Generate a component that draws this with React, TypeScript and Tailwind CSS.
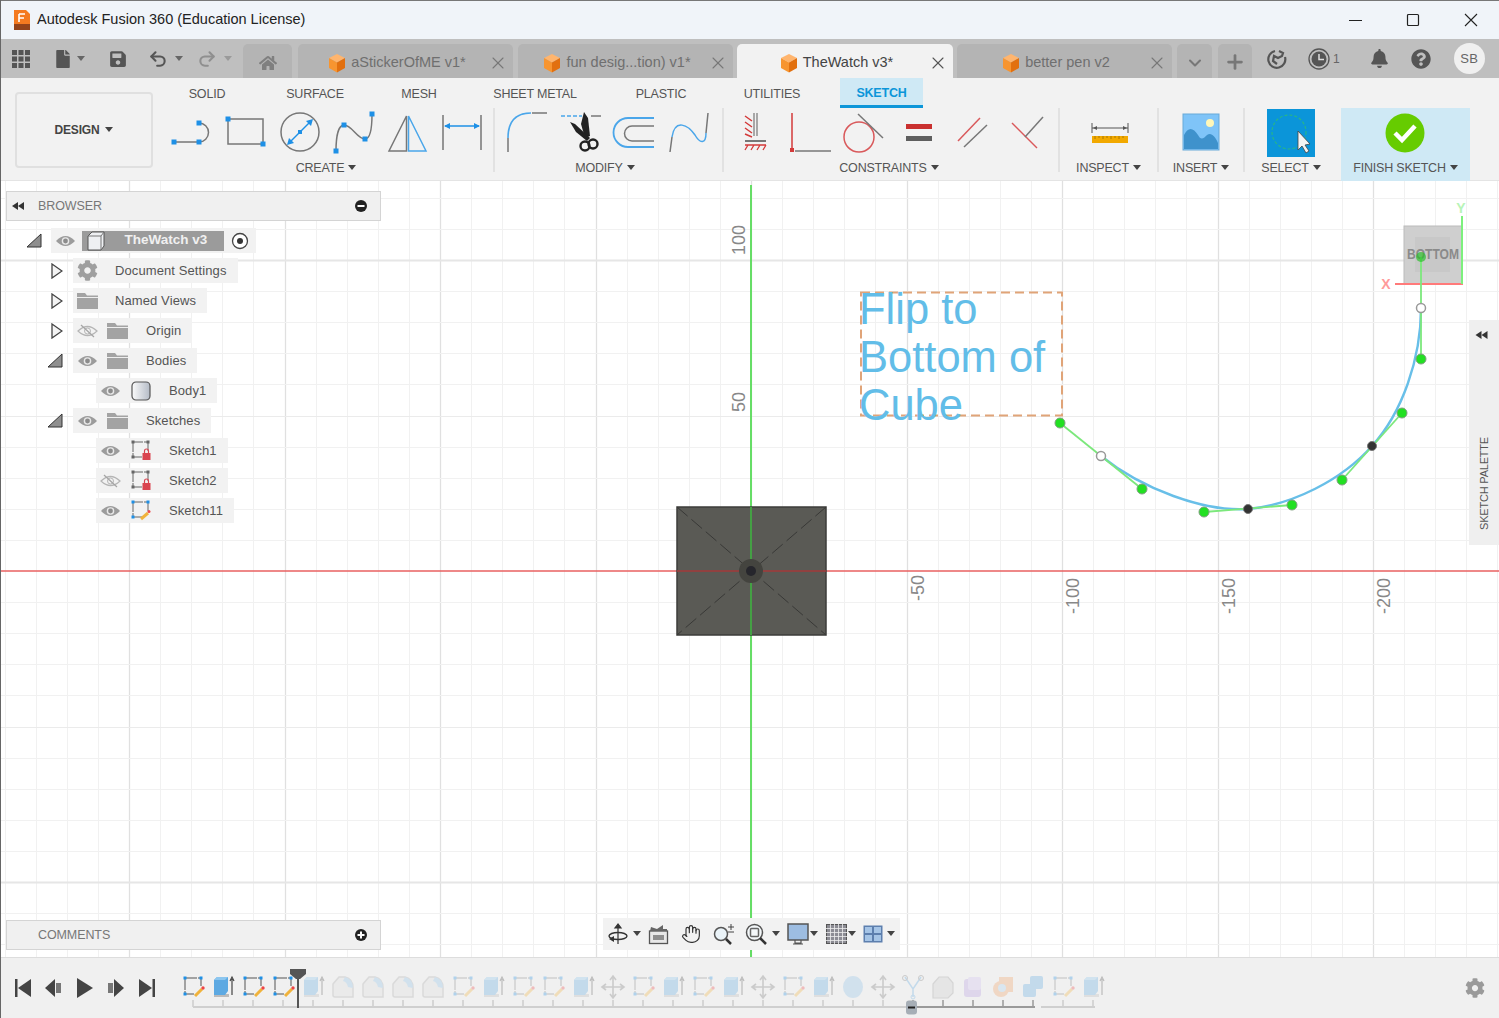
import type { ReactNode } from 'react';
import { Hand, Plus, ChevronDown, X, Undo2, Redo2 } from 'lucide-react';
import { FaCog, FaHome, FaBell, FaQuestionCircle, FaFile, FaSave } from 'react-icons/fa';

const BLUE = '#1e90e6';
const GRAY = '#777777';

function Caret({ color = '#444444' }: { color?: string }) {
    return (
        <svg width="8" height="6" viewBox="0 0 8 6" className="shrink-0">
            <polygon points="0,0 8,0 4,5" fill={color} />
        </svg>
    );
}

function Dot({ x, y, s = 5 }: { x: number; y: number; s?: number }) {
    return <rect x={x - s / 2} y={y - s / 2} width={s} height={s} fill={BLUE} />;
}

function CubeTab() {
    return (
        <svg width="18" height="20" viewBox="0 0 18 20" className="shrink-0">
            <polygon points="9,1 17,5 9,9.500 1,5" fill="#ffb56e" />
            <polygon points="1,5 9,9.500 9,19.500 1,15" fill="#f79530" />
            <polygon points="17,5 9,9.500 9,19.500 17,15" fill="#e2700f" />
        </svg>
    );
}

function Eye({ off = false }: { off?: boolean }) {
    if (off) {
        return (
            <svg width="21" height="14" viewBox="0 0 21 14">
                <path d="M1 7 Q10.500 -2 20 7 Q10.500 16 1 7Z" fill="none" stroke="#b5b5b5" strokeWidth="1.200" />
                <circle cx="10.500" cy="7" r="3" fill="none" stroke="#b5b5b5" />
                <line x1="4" y1="1" x2="17" y2="13" stroke="#a5a5a5" strokeWidth="1.200" />
            </svg>
        );
    }
    return (
        <svg width="21" height="14" viewBox="0 0 21 14">
            <path d="M1 7 Q10.500 -3 20 7 Q10.500 17 1 7Z" fill="#9c9c9c" />
            <circle cx="10.500" cy="7" r="3.800" fill="#e8e8e8" />
            <circle cx="10.500" cy="7" r="2.400" fill="#8c8c8c" />
        </svg>
    );
}

function Folder() {
    return (
        <svg width="21" height="17" viewBox="0 0 21 17">
            <path d="M0 1 H8 L10 3.500 H21 V17 H0Z" fill="#a3a3a3" />
            <rect x="0" y="5" width="21" height="1" fill="#eeeeee" />
        </svg>
    );
}

function SketchIcon({ locked = false }: { locked?: boolean }) {
    const corner = locked ? '#666666' : BLUE;
    return (
        <svg width="22" height="21" viewBox="0 0 22 21">
            <path d="M3 2 H18 M3 2 V17 M3 17 H12 M18 2 V11" stroke="#666666" strokeWidth="1" strokeDasharray="10 1" fill="none" />
            <rect x="1.500" y="0.500" width="3" height="3" fill={corner} />
            <rect x="16.500" y="0.500" width="3" height="3" fill={corner} />
            <rect x="1.500" y="15.500" width="3" height="3" fill={corner} />
            {locked ? (
                <g>
                    <rect x="12.500" y="13" width="8" height="7" fill="#d9434e" />
                    <path d="M14.500 13 V11 A2 2 0 0 1 18.500 11 V13" fill="none" stroke="#d9434e" strokeWidth="1.200" />
                </g>
            ) : (
                <g>
                    <line x1="11" y1="19" x2="18" y2="13" stroke="#f0b33c" strokeWidth="3" />
                    <circle cx="19" cy="11.500" r="1.500" fill="#ec4b4b" />
                </g>
            )}
        </svg>
    );
}

function BodyIcon() {
    return (
        <svg width="20" height="20" viewBox="0 0 20 20">
            <defs>
                <linearGradient id="bodyFill" x1="0" x2="1" y1="0" y2="0">
                    <stop offset="0" stopColor="#fbfbfb" />
                    <stop offset="1" stopColor="#b4bbc6" />
                </linearGradient>
            </defs>
            <rect x="1" y="1" width="18" height="18" rx="4" fill="url(#bodyFill)" stroke="#555555" strokeWidth="1.200" />
        </svg>
    );
}

function Expand({ open = false }: { open?: boolean }) {
    if (open) {
        return (
            <svg width="16" height="15" viewBox="0 0 16 15">
                <polygon points="15,1 15,14 1,14" fill="#8f8f8f" stroke="#333333" strokeWidth="1" />
            </svg>
        );
    }
    return (
        <svg width="12" height="16" viewBox="0 0 12 16">
            <polygon points="1,1 11,8 1,15" fill="#f4f4f4" stroke="#444444" strokeWidth="1.300" />
        </svg>
    );
}

function TreeRow({ slot, open, children, label }: { slot: string; open?: boolean; children: ReactNode; label: string }) {
    return (
        <div className="flex h-[25px] items-center">
            <div className={`flex ${slot} justify-end pr-[10px]`}>{open === undefined ? null : <Expand open={open} />}</div>
            <div className="flex h-[25px] items-center bg-[#f2f2f2] pr-[11px]">
                {children}
                <span className="ml-[13px] text-[13px] tracking-[0.1px] text-[#555555]">{label}</span>
            </div>
        </div>
    );
}

function EyeSlot({ off = false }: { off?: boolean }) {
    return (
        <div className="flex w-[29px] justify-center">
            <Eye off={off} />
        </div>
    );
}

function IconSlot({ children }: { children: ReactNode }) {
    return <div className="flex w-[31px] justify-center">{children}</div>;
}

function CreateIcons() {
    return (
        <>
            <svg width="54" height="50" viewBox="0 0 54 50">
                <path d="M9 34 H34 M34 15 A9.500 9.500 0 0 1 34 34" fill="none" stroke={GRAY} strokeWidth="1.500" />
                <Dot x={9} y={34} />
                <Dot x={34} y={34} />
                <Dot x={34} y={15} />
            </svg>
            <svg width="54" height="50" viewBox="0 0 54 50">
                <rect x="9" y="11" width="35" height="25" fill="none" stroke={GRAY} strokeWidth="1.500" />
                <Dot x={9} y={11} />
                <Dot x={44} y={36} />
            </svg>
            <svg width="54" height="50" viewBox="0 0 54 50">
                <circle cx="27" cy="24" r="19" fill="none" stroke={GRAY} strokeWidth="1.500" />
                <line x1="17" y1="34" x2="37" y2="14" stroke={BLUE} strokeWidth="1.500" />
                <polygon points="40,11 38,18 33,13" fill={BLUE} />
                <polygon points="14,37 16,30 21,35" fill={BLUE} />
                <Dot x={27} y={24} s={4} />
            </svg>
            <svg width="54" height="50" viewBox="0 0 54 50">
                <path d="M9 43 C9 30 11 17 17 17 C25 17 30 31 38 31 C43 31 45 20 45 6" fill="none" stroke={GRAY} strokeWidth="1.500" />
                <Dot x={9} y={43} />
                <Dot x={17} y={17} />
                <Dot x={38} y={31} />
                <Dot x={45} y={6} />
            </svg>
            <svg width="54" height="50" viewBox="0 0 54 50">
                <polygon points="25.500,8 25.500,43 8,43" fill="none" stroke={GRAY} strokeWidth="1.500" />
                <polygon points="27.500,8 27.500,43 45,43" fill="none" stroke="#4aa6ea" strokeWidth="1.500" />
            </svg>
            <svg width="54" height="50" viewBox="0 0 54 50">
                <path d="M8 7 V42 M46 7 V42" stroke={GRAY} strokeWidth="1.500" />
                <line x1="10" y1="18" x2="44" y2="18" stroke={BLUE} strokeWidth="1.500" />
                <polygon points="9,18 15,15 15,21" fill={BLUE} />
                <polygon points="45,18 39,15 39,21" fill={BLUE} />
            </svg>
        </>
    );
}

function ModifyIcons() {
    return (
        <>
            <svg width="54" height="50" viewBox="0 0 54 50">
                <path d="M8 30 Q8 5 31 5" fill="none" stroke="#4aa6ea" strokeWidth="1.600" />
                <path d="M8 30 V44 M32 5 H47" fill="none" stroke={GRAY} strokeWidth="1.500" />
            </svg>
            <svg width="54" height="50" viewBox="0 0 54 50">
                <path d="M7 8 H28" stroke="#4aa6ea" strokeWidth="1.500" strokeDasharray="4 2" />
                <path d="M37 8 H47" stroke={GRAY} strokeWidth="1.500" />
                <polygon points="30,4 34,10 36,28 31,30 27,16" fill="#222222" />
                <polygon points="16,14 21,16 36,30 33,33 22,24" fill="#222222" />
                <circle cx="31" cy="38" r="4.500" fill="none" stroke="#222222" strokeWidth="2.400" />
                <circle cx="39" cy="36" r="4.500" fill="none" stroke="#222222" strokeWidth="2.400" />
            </svg>
            <svg width="54" height="50" viewBox="0 0 54 50">
                <path d="M46 10 H20 A14.500 14.500 0 0 0 20 39 H46" fill="none" stroke="#4aa6ea" strokeWidth="1.800" />
                <path d="M46 18 H24 A7.500 7.500 0 0 0 24 33 H46" fill="none" stroke={GRAY} strokeWidth="1.500" />
            </svg>
            <svg width="54" height="50" viewBox="0 0 54 50">
                <path d="M8 44 L10 29 M44 25 L46 5" fill="none" stroke={GRAY} strokeWidth="1.500" />
                <path d="M10 29 C13 10 26 17 33 27 C38 36 44 36 44 25" fill="none" stroke="#4aa6ea" strokeWidth="1.500" />
            </svg>
        </>
    );
}

function ConstraintIcons() {
    const red = '#d33a3a';
    return (
        <>
            <svg width="54" height="50" viewBox="0 0 54 50">
                <path d="M25 5 V28 M28 5 V28" stroke={GRAY} strokeWidth="1.200" />
                <path d="M16 8 L23 13 M16 14 L23 19 M16 20 L23 25 M16 26 L23 29" stroke={red} strokeWidth="1.500" />
                <path d="M16 33 H37" stroke={GRAY} strokeWidth="2" />
                <path d="M16 37 H37 M19 37 L16 42 M25 37 L22 42 M31 37 L28 42 M37 37 L34 42" stroke={red} strokeWidth="1.300" fill="none" />
            </svg>
            <svg width="54" height="50" viewBox="0 0 54 50">
                <line x1="9" y1="5" x2="9" y2="41" stroke={red} strokeWidth="1.500" />
                <rect x="7" y="40" width="4" height="4" fill={red} />
                <line x1="12" y1="43" x2="48" y2="43" stroke={GRAY} strokeWidth="1.500" />
            </svg>
            <svg width="54" height="50" viewBox="0 0 54 50">
                <circle cx="22" cy="29" r="15" fill="none" stroke="#d9595b" strokeWidth="1.500" />
                <line x1="21" y1="6" x2="46" y2="30" stroke={GRAY} strokeWidth="1.500" />
            </svg>
            <svg width="54" height="50" viewBox="0 0 54 50">
                <rect x="15" y="16" width="26" height="5" fill="#c9302f" />
                <rect x="15" y="28" width="26" height="5" fill="#5e5e5e" />
            </svg>
            <svg width="54" height="50" viewBox="0 0 54 50">
                <line x1="35" y1="10" x2="13" y2="33" stroke="#d9595b" strokeWidth="1.500" />
                <line x1="42" y1="17" x2="19" y2="39" stroke={GRAY} strokeWidth="1.500" />
            </svg>
            <svg width="54" height="50" viewBox="0 0 54 50">
                <line x1="13" y1="15" x2="38" y2="40" stroke="#d9595b" strokeWidth="1.500" />
                <line x1="44" y1="9" x2="26" y2="29" stroke={GRAY} strokeWidth="1.500" />
            </svg>
        </>
    );
}

function InspectIcon() {
    return (
        <svg width="54" height="50" viewBox="0 0 54 50">
            <path d="M10 15 V25 M46 15 V25 M10 20 H46" stroke="#555555" strokeWidth="1" />
            <polygon points="11,20 15,18 15,22" fill="#555555" />
            <polygon points="45,20 41,18 41,22" fill="#555555" />
            <rect x="10" y="28" width="36" height="7" fill="#f2a900" />
            <path d="M13 28 V31 M17 28 V30 M21 28 V31 M25 28 V30 M29 28 V31 M33 28 V30 M37 28 V31 M41 28 V30" stroke="#9a6c00" strokeWidth="0.800" />
        </svg>
    );
}

function InsertIcon() {
    return (
        <svg width="54" height="50" viewBox="0 0 54 50">
            <rect x="9" y="6" width="36" height="36" fill="#7fc4f8" stroke="#69a9d8" />
            <circle cx="36" cy="15" r="4" fill="#fff7b8" />
            <path d="M10 41 V27 C14 19 19 19 24 27 C27 33 30 30 33 27 C37 24 41 28 44 35 V41Z" fill="#3f92cc" />
        </svg>
    );
}

function SelectIcon() {
    return (
        <svg width="54" height="50" viewBox="0 0 54 50">
            <rect x="3" y="1" width="48" height="48" fill="#0b95d9" />
            <circle cx="25" cy="24" r="17" fill="none" stroke="#27b58a" strokeWidth="1.200" strokeDasharray="3 2" />
            <polygon points="34,23 34,42 38,38 42,45 45,43 41,37 46,36" fill="#f4f4f4" stroke="#444444" strokeWidth="0.800" />
        </svg>
    );
}

function RibbonGroup({ label, width, pad, labelPad = '', children, last = false }: { label: string; width: string; pad: string; labelPad?: string; children: ReactNode; last?: boolean }) {
    return (
        <div className={`flex ${width} shrink-0 ${last ? '' : 'border-r-2 border-[#e2e2e2]'} ${pad} h-[64px] flex-col`}>
            <div className="flex h-[50px] justify-center overflow-visible">{children}</div>
            <div className={`flex items-center justify-center gap-[4px] pt-[1px] text-[12.500px] tracking-[-0.2px] text-[#555555] ${labelPad}`}>
                {label}
                <Caret />
            </div>
        </div>
    );
}

function RibbonTab({ width, label }: { width: string; label: string }) {
    return <div className={`${width} flex h-[30px] items-center justify-center pt-[2px] text-[12.500px] tracking-[-0.2px] text-[#555555]`}>{label}</div>;
}

function Ribbon() {
    return (
        <div className="flex h-[103px] shrink-0 border-b border-[#e4e4e4] bg-[#f2f2f2]">
            <div className="ml-[15px] mt-[14px] flex h-[76px] w-[138px] items-center justify-center gap-[6px] rounded-[4px] border-2 border-[#e0e0e0] text-[12px] font-bold tracking-[-0.2px] text-[#444444]">
                DESIGN
                <Caret />
            </div>
            <div className="ml-[12px] flex-1">
                <div className="flex h-[30px]">
                    <RibbonTab width="w-[84px]" label="SOLID" />
                    <RibbonTab width="w-[132px]" label="SURFACE" />
                    <RibbonTab width="w-[76px]" label="MESH" />
                    <RibbonTab width="w-[156px]" label="SHEET METAL" />
                    <RibbonTab width="w-[96px]" label="PLASTIC" />
                    <RibbonTab width="w-[126px]" label="UTILITIES" />
                    <div className="ml-[5px] flex h-[30px] w-[83px] items-center justify-center border-b-[3px] border-[#0c96d9] bg-[#cfe9f5] pt-[3px] text-[12.500px] font-bold tracking-[-0.2px] text-[#0c96d9]">SKETCH</div>
                </div>
                <div className="flex">
                    <RibbonGroup label="CREATE" width="w-[330px]" pad="pr-[4px]" labelPad="pr-[2px]">
                        <CreateIcons />
                    </RibbonGroup>
                    <RibbonGroup label="MODIFY" width="w-[229px]" pad="pl-[5px] pr-[6px]" labelPad="pr-[6px]">
                        <ModifyIcons />
                    </RibbonGroup>
                    <RibbonGroup label="CONSTRAINTS" width="w-[336px]" pad="pl-[5px] pr-[5px]" labelPad="pr-[4px]">
                        <ConstraintIcons />
                    </RibbonGroup>
                    <RibbonGroup label="INSPECT" width="w-[99px]" pad="">
                        <InspectIcon />
                    </RibbonGroup>
                    <RibbonGroup label="INSERT" width="w-[86px]" pad="">
                        <InsertIcon />
                    </RibbonGroup>
                    <RibbonGroup label="SELECT" width="w-[96px]" pad="pr-[4px]" last>
                        <SelectIcon />
                    </RibbonGroup>
                    <div className="flex h-[73px] w-[129px] flex-col items-center bg-[#cfe9f5]">
                        <svg width="54" height="50" viewBox="0 0 54 50">
                            <circle cx="26" cy="25" r="19.500" fill="#66cc00" />
                            <path d="M16 25 L23 32 L36 18" fill="none" stroke="#ffffff" strokeWidth="4.500" />
                        </svg>
                        <div className="flex items-center gap-[4px] pt-[1px] text-[12.500px] tracking-[-0.2px] text-[#555555]">
                            FINISH SKETCH
                            <Caret />
                        </div>
                    </div>
                </div>
            </div>
        </div>
    );
}

function DocTab({ name, active = false, gap = 'ml-0', width = 'w-[215px]' }: { name: string; active?: boolean; gap?: string; width?: string }) {
    return (
        <div className={`${gap} flex h-[34px] ${width} shrink-0 items-center rounded-t-[5px] pl-[6px] pr-[7px] ${active ? 'bg-[#f2f2f2] text-[#444444]' : 'bg-[#b4b4b4] text-[#6f6f6f]'}`}>
            <div className="flex flex-1 items-center justify-center gap-[5px] pt-[3px] text-[14.500px]">
                <CubeTab />
                <span>{name}</span>
            </div>
            <X size={20} strokeWidth={1.300} className={`-mx-[2px] mt-[3px] ${active ? 'text-[#555555]' : 'text-[#777777]'}`} />
        </div>
    );
}

function TabBar() {
    return (
        <div className="flex h-[39px] shrink-0 items-end bg-[#bfbfbf]">
            <div className="flex h-[39px] w-[243px] shrink-0 items-center text-[#555555]">
                <svg width="18" height="18" viewBox="0 0 18 18" className="ml-[12px]">
                    {[0, 6.5, 13].map((x) =>
                        [0, 6.5, 13].map((y) => <rect key={`${x}-${y}`} x={x} y={y} width="5" height="5" fill="#555555" />),
                    )}
                </svg>
                <FaFile size={18} className="ml-[24px]" />
                <div className="ml-[5px]"><Caret color="#666666" /></div>
                <FaSave size={18} className="ml-[24px]" />
                <Undo2 size={20} strokeWidth={2.500} className="ml-[21px]" />
                <div className="ml-[7px]"><Caret color="#666666" /></div>
                <Redo2 size={20} strokeWidth={2.500} className="ml-[14px] text-[#8f8f8f]" />
                <div className="ml-[7px]"><Caret color="#9a9a9a" /></div>
            </div>
            <div className="flex h-[34px] w-[49px] shrink-0 items-center justify-center rounded-t-[5px] bg-[#b4b4b4] pt-[3px] text-[#7f7f7f]">
                <FaHome size={18} />
            </div>
            <DocTab name="aStickerOfME v1*" gap="ml-[6px]" />
            <DocTab name="fun desig...tion) v1*" gap="ml-[5px]" />
            <DocTab name="TheWatch v3*" active gap="ml-[4px]" width="w-[216px]" />
            <DocTab name="better pen v2" gap="ml-[4px]" />
            <div className="ml-[5px] flex h-[34px] w-[35px] items-center justify-center rounded-t-[5px] bg-[#b4b4b4] pt-[3px] text-[#777777]">
                <ChevronDown size={20} strokeWidth={2.500} />
            </div>
            <div className="ml-[6px] flex h-[34px] w-[34px] items-center justify-center rounded-t-[5px] bg-[#b4b4b4] pt-[1px] text-[#777777]">
                <Plus size={22} strokeWidth={3} />
            </div>
            <div className="flex h-[39px] flex-1 items-center text-[#555555]">
                <svg width="20" height="20" viewBox="0 0 20 20" className="ml-[15px]">
                    <path d="M8 2 A8.500 8.500 0 1 0 18 8 M12 2 L16 4 L15 7 L11 9 L7 7 L6 12 L10 15" fill="none" stroke="#555555" strokeWidth="2.200" />
                </svg>
                <svg width="22" height="22" viewBox="0 0 22 22" className="ml-[21px]">
                    <circle cx="11" cy="11" r="10" fill="none" stroke="#555555" strokeWidth="1.300" />
                    <circle cx="11" cy="11" r="7.500" fill="#555555" />
                    <path d="M11 6 V11.500 H16" fill="none" stroke="#dddddd" strokeWidth="1.500" />
                </svg>
                <span className="ml-[3px] text-[12px] text-[#666666]">1</span>
                <FaBell size={19} className="ml-[30px]" />
                <FaQuestionCircle size={20} className="ml-[22px]" />
                <div className="ml-[23px] flex h-[31px] w-[31px] items-center justify-center rounded-full bg-[#f0f0f0] text-[13px] tracking-[0.3px] text-[#666666]">SB</div>
            </div>
        </div>
    );
}

function TitleBar() {
    return (
        <div className="flex h-[39px] shrink-0 items-center border-t border-[#777777] bg-[#f0f4f9]">
            <svg width="19" height="20" viewBox="0 0 19 20" className="ml-[12px]">
                <path d="M2 0 H14 L18 4 V20 H2Z" fill="#f47a20" />
                <rect x="2" y="14" width="16" height="6" fill="#94431a" />
                <path d="M7 4 H13 M7 4 V12 M7 8 H12" stroke="#ffffff" strokeWidth="1.600" fill="none" />
            </svg>
            <span className="ml-[6px] text-[14.500px] text-[#222222]">Autodesk Fusion 360 (Education License)</span>
            <div className="ml-auto flex items-center">
                <svg width="14" height="14" viewBox="0 0 14 14" className="mr-[44px]"><line x1="1" y1="7.500" x2="14" y2="7.500" stroke="#222222" /></svg>
                <svg width="14" height="14" viewBox="0 0 14 14" className="mr-[44px]"><rect x="1.500" y="1.500" width="11" height="11" rx="1" fill="none" stroke="#222222" strokeWidth="1.200" /></svg>
                <svg width="14" height="14" viewBox="0 0 14 14" className="mr-[21px]"><path d="M1 1 L13 13 M13 1 L1 13" stroke="#222222" strokeWidth="1.100" /></svg>
            </div>
        </div>
    );
}

const handles = [
    [1060, 423, 1142, 489],
    [1204, 512, 1292, 505],
    [1342, 480, 1402, 413],
    [1421, 359, 1421, 257],
];
const greenPoints = [
    [1060, 423],
    [1142, 489],
    [1204, 512],
    [1292, 505],
    [1342, 480],
    [1402, 413],
    [1421, 359],
];

function Drawing() {
    const cols = Array.from({ length: 49 }, (_, i) => i - 24);
    const rows = Array.from({ length: 26 }, (_, i) => i - 13);
    return (
        <svg width="1499" height="776" viewBox="0 181 1499 776" className="absolute inset-0 bg-white">
            {cols.map((k) => {
                const x = Math.round(751 + k * 31.1) + 0.5;
                return <line key={`v${k}`} x1={x} x2={x} y1="181" y2="957" stroke={k % 5 === 0 ? '#e0e0e0' : '#f1f1f1'} strokeWidth={k % 5 === 0 ? 1.300 : 1} />;
            })}
            {rows.filter((k) => k !== 0).map((k) => {
                const y = Math.round(571 + k * 31.1) + 0.5;
                const strong = k % 10 === 0;
                return <line key={`h${k}`} y1={y} y2={y} x1="0" x2="1499" stroke={strong ? '#e6e6e6' : k % 5 === 0 ? '#ebebeb' : '#f1f1f1'} strokeWidth={strong ? 2 : 1} />;
            })}

            {/* axes and base sketch */}
            <line x1="0" x2="1499" y1="571" y2="571" stroke="#e86060" strokeWidth="1.400" />
            <line x1="751" x2="751" y1="185" y2="957" stroke="#66dd66" strokeWidth="2" />
            <rect x="677" y="507" width="149" height="128" fill="#5a5a55" stroke="#3c3c3a" strokeWidth="1.500" />
            <path d="M677 507 L826 635 M826 507 L677 635" stroke="#383836" strokeDasharray="14 5" />
            <line x1="677" x2="826" y1="571" y2="571" stroke="#a33a3a" strokeWidth="1.400" />
            <line x1="751" x2="751" y1="507" y2="635" stroke="#44a044" strokeWidth="2" />
            <circle cx="751" cy="571" r="12" fill="#44443f" />
            <circle cx="751" cy="571" r="5" fill="#26262c" />

            {/* ruler numbers */}
            <g fill="#888888" fontSize="18" fontFamily="Liberation Sans, sans-serif" textAnchor="middle">
                <text transform="translate(745 240) rotate(-90)">100</text>
                <text transform="translate(745 402) rotate(-90)">50</text>
                <text transform="translate(924 588) rotate(-90)">-50</text>
                <text transform="translate(1079 596) rotate(-90)">-100</text>
                <text transform="translate(1235 596) rotate(-90)">-150</text>
                <text transform="translate(1390 596) rotate(-90)">-200</text>
            </g>

            {/* sketch text */}
            <rect x="861" y="292.500" width="201" height="123" fill="none" stroke="#e0a478" strokeWidth="2" strokeDasharray="9 5" />
            <g fill="#62bde8" fontSize="43.500" fontFamily="Liberation Sans, sans-serif">
                <text x="859" y="324">Flip to</text>
                <text x="859" y="372">Bottom of</text>
                <text x="859" y="420">Cube</text>
            </g>

            {/* view cube */}
            <rect x="1404" y="226" width="58" height="58" fill="#cfcfcf" stroke="#bcbcbc" />
            <rect x="1415" y="237" width="35" height="35" fill="#c8c8c8" />
            <text x="1433" y="259" textAnchor="middle" fontSize="15" fontWeight="700" fill="#8a8a8a" fontFamily="Liberation Sans, sans-serif" textLength="52" lengthAdjust="spacingAndGlyphs">BOTTOM</text>
            <line x1="1395" x2="1463" y1="284" y2="284" stroke="#ff7a7a" strokeWidth="2" />
            <line x1="1462" x2="1462" y1="216" y2="284" stroke="#7df07d" strokeWidth="2" />
            <text x="1386" y="289" textAnchor="middle" fontSize="14" fontWeight="700" fill="#ff9a9a" fontFamily="Liberation Sans, sans-serif">X</text>
            <text x="1461" y="213" textAnchor="middle" fontSize="14" fontWeight="700" fill="#b8f4b8" fontFamily="Liberation Sans, sans-serif">Y</text>

            {/* spline and handles */}
            <path d="M1101 456 C1142 489 1204 512 1248 509 C1292 505 1342 480 1372 446 C1402 413 1421 359 1421 308" fill="none" stroke="#68bfe8" strokeWidth="2.400" />
            {handles.map(([x1, y1, x2, y2], i) => (
                <line key={i} x1={x1} y1={y1} x2={x2} y2={y2} stroke="#7ce87c" strokeWidth="1.800" />
            ))}
            {greenPoints.map(([cx, cy], i) => (
                <circle key={i} cx={cx} cy={cy} r="5" fill="#22e022" stroke="#7f9f7f" />
            ))}
            <circle cx="1421" cy="257" r="5" fill="#22c022" opacity="0.650" />
            <circle cx="1248" cy="509" r="4.500" fill="#333333" stroke="#777777" />
            <circle cx="1372" cy="446" r="4.500" fill="#333333" stroke="#777777" />
            <circle cx="1101" cy="456" r="4.500" fill="#ffffff" stroke="#999999" strokeWidth="1.500" />
            <circle cx="1421" cy="308" r="4.500" fill="#ffffff" stroke="#999999" strokeWidth="1.500" />
        </svg>
    );
}

function PanelBar({ title, plus = false, arrows = false }: { title: string; plus?: boolean; arrows?: boolean }) {
    return (
        <div className="relative flex h-[30px] w-[375px] items-center border border-[#d4d4d4] bg-[#f0f0f0] pl-[31px] pr-[13px]">
            {arrows && (
                <svg width="12" height="8" viewBox="0 0 12 8" className="absolute left-[5px] top-[10px]">
                    <polygon points="0,4 6,0 6,8" fill="#333333" />
                    <polygon points="6,4 12,0 12,8" fill="#333333" />
                </svg>
            )}
            <span className="flex-1 text-[12.500px] tracking-[-0.1px] text-[#777777]">{title}</span>
            <svg width="12" height="12" viewBox="0 0 12 12">
                <circle cx="6" cy="6" r="6" fill="#222222" />
                <rect x="2.500" y="5" width="7" height="2" fill="#ffffff" />
                {plus && <rect x="5" y="2.500" width="2" height="7" fill="#ffffff" />}
            </svg>
        </div>
    );
}

function Browser() {
    return (
        <div className="absolute left-0 top-[10px] w-[381px]">
            <div className="ml-[6px]">
                <PanelBar title="BROWSER" arrows />
            </div>
            <div className="mt-[7px] flex flex-col gap-[5px]">
                <div className="flex h-[25px] items-center">
                    <div className="flex w-[51px] justify-end pr-[9px]"><Expand open /></div>
                    <div className="flex h-[25px] items-center bg-[#f2f2f2]">
                        <EyeSlot />
                        <div className="ml-[2px] flex h-[20px] w-[142px] items-center bg-[#9b9b9b]">
                            <svg width="20" height="20" viewBox="0 0 20 20" className="ml-[4px] shrink-0">
                                <polygon points="2,5 6,1 18,1 18,15 15,19 2,19" fill="#eef0f3" stroke="#555555" />
                                <path d="M2 5 H15 V19 M15 5 L18 1" fill="none" stroke="#777777" />
                            </svg>
                            <span className="flex-1 pl-[2px] text-center text-[13.500px] font-bold text-[#f0f0f0]">TheWatch v3</span>
                        </div>
                        <div className="flex w-[32px] justify-center">
                            <svg width="18" height="18" viewBox="0 0 18 18">
                                <circle cx="9" cy="9" r="7.500" fill="#ffffff" stroke="#444444" strokeWidth="1.300" />
                                <circle cx="9" cy="9" r="3" fill="#333333" />
                            </svg>
                        </div>
                    </div>
                </div>
                <TreeRow slot="w-[73px]" open={false} label="Document Settings">
                    <div className="flex w-[29px] justify-center text-[#9f9f9f]"><FaCog size={21} /></div>
                </TreeRow>
                <TreeRow slot="w-[73px]" open={false} label="Named Views">
                    <div className="flex w-[29px] justify-center"><Folder /></div>
                </TreeRow>
                <TreeRow slot="w-[73px]" open={false} label="Origin">
                    <EyeSlot off />
                    <IconSlot><Folder /></IconSlot>
                </TreeRow>
                <TreeRow slot="w-[73px]" open label="Bodies">
                    <EyeSlot />
                    <IconSlot><Folder /></IconSlot>
                </TreeRow>
                <TreeRow slot="w-[96px]" label="Body1">
                    <EyeSlot />
                    <IconSlot><BodyIcon /></IconSlot>
                </TreeRow>
                <TreeRow slot="w-[73px]" open label="Sketches">
                    <EyeSlot />
                    <IconSlot><Folder /></IconSlot>
                </TreeRow>
                <TreeRow slot="w-[96px]" label="Sketch1">
                    <EyeSlot />
                    <IconSlot><SketchIcon locked /></IconSlot>
                </TreeRow>
                <TreeRow slot="w-[96px]" label="Sketch2">
                    <EyeSlot off />
                    <IconSlot><SketchIcon locked /></IconSlot>
                </TreeRow>
                <TreeRow slot="w-[96px]" label="Sketch11">
                    <EyeSlot />
                    <IconSlot><SketchIcon /></IconSlot>
                </TreeRow>
            </div>
        </div>
    );
}

function NavBar() {
    return (
        <div className="absolute bottom-[7px] left-[603px] flex h-[32px] w-[297px] items-center bg-[#f2f2f2]">
            <div className="flex w-[30px] justify-center">
                <svg width="22" height="22" viewBox="0 0 22 22">
                    <path d="M11 1 L8 5 H14Z M11 5 V21" stroke="#333333" fill="#333333" strokeWidth="1.200" />
                    <ellipse cx="11" cy="13" rx="9" ry="3.500" fill="none" stroke="#333333" strokeWidth="1.400" />
                    <polygon points="2,16 7,13 7,19" fill="#333333" />
                </svg>
            </div>
            <Caret />
            <div className="flex w-[34px] justify-center">
                <svg width="21" height="21" viewBox="0 0 21 21">
                    <rect x="1.500" y="7" width="18" height="12.500" fill="#e8e8e8" stroke="#555555" strokeWidth="1.300" />
                    <rect x="5" y="11" width="11" height="5" fill="#8f8f8f" />
                    <path d="M2 7 L3 3 L9 5 L15 1 V5 H19 V7" fill="#666666" />
                </svg>
            </div>
            <div className="flex w-[32px] justify-center text-[#333333]"><Hand size={20} strokeWidth={1.400} /></div>
            <div className="flex w-[32px] justify-center">
                <svg width="22" height="22" viewBox="0 0 22 22">
                    <circle cx="9" cy="11" r="6.500" fill="#eaf3f8" stroke="#555555" strokeWidth="1.500" />
                    <line x1="14" y1="16" x2="19" y2="21" stroke="#333333" strokeWidth="2.500" />
                    <path d="M16 4 H22 M19 1 V7 M16 9 H22" stroke="#444444" strokeWidth="1" />
                </svg>
            </div>
            <div className="flex w-[33px] justify-center">
                <svg width="22" height="22" viewBox="0 0 22 22">
                    <circle cx="9.500" cy="9.500" r="8" fill="#f4f8fa" stroke="#555555" strokeWidth="1.500" />
                    <rect x="5.500" y="5.500" width="8" height="8" rx="1" fill="none" stroke="#666666" strokeWidth="1.500" />
                    <line x1="15" y1="15" x2="21" y2="21" stroke="#333333" strokeWidth="2.500" />
                </svg>
            </div>
            <Caret />
            <div className="ml-[6px] flex w-[24px] justify-center">
                <svg width="22" height="24" viewBox="0 0 22 24">
                    <rect x="1" y="2" width="20" height="16" fill="#9dbde2" stroke="#555555" strokeWidth="1.500" />
                    <path d="M8 18 V21 H14 V18 M6 22 H16" fill="none" stroke="#555555" strokeWidth="1.200" />
                </svg>
            </div>
            <Caret />
            <div className="ml-[6px] flex w-[24px] justify-center">
                <svg width="21" height="20" viewBox="0 0 21 20">
                    <rect x="0.500" y="0.500" width="20" height="19" fill="#8c8c94" stroke="#555555" />
                    <path d="M4.500 0 V20 M8.500 0 V20 M12.500 0 V20 M16.500 0 V20 M0 4.500 H21 M0 8.500 H21 M0 12.500 H21 M0 16.500 H21" stroke="#efefef" strokeWidth="0.800" />
                </svg>
            </div>
            <Caret />
            <div className="ml-[5px] flex w-[24px] justify-center">
                <svg width="20" height="18" viewBox="0 0 20 18">
                    <rect x="0.500" y="0.500" width="19" height="17" fill="#5d7fae" />
                    <rect x="2" y="2" width="7" height="6" fill="#a5c4e6" />
                    <rect x="11" y="2" width="7" height="6" fill="#a5c4e6" />
                    <rect x="2" y="10" width="7" height="6" fill="#a5c4e6" />
                    <rect x="11" y="10" width="7" height="6" fill="#a5c4e6" />
                </svg>
            </div>
            <div className="ml-[2px]"><Caret /></div>
        </div>
    );
}

function SketchPalette() {
    return (
        <div className="absolute right-0 top-[139px] flex h-[225px] w-[30px] flex-col items-center justify-between bg-[#efefef] pb-[15px] pt-[11px]">
            <svg width="13" height="8" viewBox="0 0 12 8" className="-ml-[6px]">
                <polygon points="0,4 6,0 6,8" fill="#333333" />
                <polygon points="6,4 12,0 12,8" fill="#333333" />
            </svg>
            <span className="rotate-180 text-[11px] tracking-[-0.2px] text-[#555555] [writing-mode:vertical-rl]">SKETCH PALETTE</span>
        </div>
    );
}

type StepKind = 'sketch' | 'extrude' | 'fillet' | 'move' | 'sphere' | 'split' | 'chamfer' | 'purple' | 'orange' | 'combine';

function StepIcon({ kind }: { kind: StepKind }) {
    let art: ReactNode = null;
    if (kind === 'sketch') {
        art = (
            <>
                <path d="M7 5 H23 M7 5 V21 M7 21 H16 M23 5 V13" stroke="#555555" strokeDasharray="12 1" fill="none" />
                <rect x="5.500" y="3.500" width="3" height="3" fill={BLUE} />
                <rect x="21.500" y="3.500" width="3" height="3" fill={BLUE} />
                <rect x="5.500" y="19.500" width="3" height="3" fill={BLUE} />
                <line x1="17" y1="23" x2="24" y2="16" stroke="#f0b33c" strokeWidth="3" />
                <circle cx="25" cy="15" r="1.700" fill="#ee4444" />
            </>
        );
    } else if (kind === 'extrude') {
        art = (
            <>
                <rect x="6" y="21" width="15" height="3" fill="#bbbbbb" />
                <polygon points="6,7 9,4 20,4 20,18 17,22 6,22" fill="#5da9e2" />
                <polygon points="6,7 9,4 20,4 17,7" fill="#8cc6ef" />
                <path d="M24 22 V6 M22 8 L24 4 L26 8" stroke="#444444" strokeWidth="1.200" fill="none" />
            </>
        );
    } else if (kind === 'fillet') {
        art = (
            <>
                <path d="M5 11 L11 4 H17 Q25 6 25 15 V24 H7 Q5 24 5 22Z" fill="#dddddd" stroke="#a8a8a8" strokeWidth="1.500" />
                <path d="M17 4 Q25 6 25 15 L20 14 Q19 9 15 8Z" fill="#8cc0e8" />
            </>
        );
    } else if (kind === 'move') {
        art = <path d="M15 4 V24 M5 14 H25 M12 7 L15 3 L18 7 M12 21 L15 25 L18 21 M8 11 L4 14 L8 17 M22 11 L26 14 L22 17" stroke="#777777" strokeWidth="1.600" fill="none" />;
    } else if (kind === 'sphere') {
        art = <ellipse cx="15" cy="14" rx="10" ry="11" fill="#8cc0e8" />;
    } else if (kind === 'split') {
        art = (
            <>
                <path d="M7 4 L15 16 L23 4 M15 16 V24" stroke="#5da9e2" strokeWidth="1.500" fill="none" />
                <circle cx="7" cy="5" r="2.500" fill="none" stroke="#777777" />
                <circle cx="23" cy="5" r="2.500" fill="none" stroke="#777777" />
                <circle cx="15" cy="24" r="2" fill="none" stroke="#5da9e2" />
            </>
        );
    } else if (kind === 'chamfer') {
        art = <path d="M5 11 L11 4 H20 L25 10 V20 L20 25 H5Z" fill="#cccccc" stroke="#999999" strokeWidth="1.200" />;
    } else if (kind === 'purple') {
        art = (
            <>
                <rect x="6" y="6" width="17" height="18" rx="3" fill="#b59be0" />
                <rect x="10" y="4" width="13" height="13" rx="2" fill="#d0bff0" />
            </>
        );
    } else if (kind === 'orange') {
        art = (
            <>
                <rect x="11" y="4" width="14" height="15" fill="#f0a060" />
                <circle cx="13" cy="16" r="8" fill="#f0a060" />
                <circle cx="14" cy="15" r="4" fill="#a8d0ee" />
            </>
        );
    } else if (kind === 'combine') {
        art = (
            <>
                <rect x="12" y="3" width="13" height="13" rx="2" fill="#5da9e2" />
                <rect x="5" y="11" width="13" height="13" rx="2" fill="#5da9e2" />
            </>
        );
    }
    return (
        <svg width="30" height="27" viewBox="0 0 30 27" className="shrink-0">
            {art}
        </svg>
    );
}

const steps: StepKind[] = [
    'sketch', 'extrude', 'sketch', 'sketch', 'extrude', 'fillet', 'fillet', 'fillet', 'fillet', 'sketch', 'extrude',
    'sketch', 'sketch', 'extrude', 'move', 'sketch', 'extrude', 'sketch', 'extrude', 'move', 'sketch', 'extrude',
    'sphere', 'move', 'split', 'chamfer', 'purple', 'orange', 'combine', 'sketch', 'extrude',
];

function Transport() {
    const c = '#444444';
    return (
        <div className="flex w-[178px] shrink-0 items-center pl-[7px]">
            <div className="flex w-[31px] justify-center">
                <svg width="16" height="18" viewBox="0 0 16 18"><rect x="0" y="0" width="2.500" height="18" fill={c} /><polygon points="16,0 16,18 3,9" fill={c} /></svg>
            </div>
            <div className="flex w-[31px] justify-center">
                <svg width="17" height="18" viewBox="0 0 17 18"><polygon points="10,0 10,18 0,9" fill={c} /><rect x="11" y="4" width="5" height="10" fill="#777777" /></svg>
            </div>
            <div className="flex w-[31px] justify-center">
                <svg width="16" height="20" viewBox="0 0 16 20"><polygon points="0,0 16,10 0,20" fill={c} /></svg>
            </div>
            <div className="flex w-[31px] justify-center">
                <svg width="17" height="18" viewBox="0 0 17 18"><rect x="1" y="4" width="5" height="10" fill="#777777" /><polygon points="7,0 7,18 17,9" fill={c} /></svg>
            </div>
            <div className="flex w-[32px] justify-center">
                <svg width="16" height="18" viewBox="0 0 16 18"><polygon points="0,0 0,18 13,9" fill={c} /><rect x="13.500" y="0" width="2.500" height="18" fill={c} /></svg>
            </div>
        </div>
    );
}

function Ruler() {
    const ticks = Array.from({ length: 31 }, (_, i) => 15 + i * 30);
    return (
        <svg width="932" height="16" viewBox="0 0 932 16" className="block">
            {ticks.map((x) => (
                <line key={x} x1={x} x2={x} y1="0" y2="7" stroke={x > 733 && x < 860 ? '#9a9a9a' : '#cccccc'} strokeWidth="1.500" />
            ))}
            <line x1="15" x2="733" y1="7" y2="7" stroke="#cfcfcf" strokeWidth="2" />
            <line x1="733" x2="857" y1="7" y2="7" stroke="#9a9a9a" strokeWidth="2" />
            <line x1="863" x2="917" y1="7" y2="7" stroke="#cfcfcf" strokeWidth="2" />
            <rect x="728" y="0.500" width="11" height="14" rx="3" fill="#a6aeb6" />
            <rect x="730" y="6.500" width="7" height="2" fill="#222222" />
        </svg>
    );
}

function Timeline() {
    return (
        <div className="flex h-[61px] shrink-0 border-t border-[#dddddd] bg-[#f0f0f0]">
            <Transport />
            <div className="relative pt-[15px]">
                <div className="flex">
                    {steps.map((kind, i) => (
                        <div key={i} className={i < 4 ? 'flex' : 'flex opacity-30'}>
                            <StepIcon kind={kind} />
                        </div>
                    ))}
                </div>
                <Ruler />
                <svg width="16" height="40" viewBox="0 0 16 40" className="absolute left-[112px] top-[11px]">
                    <polygon points="0,0 16,0 16,5 10,10 9,10 9,39 7,39 7,10 6,10 0,5" fill="#555555" />
                </svg>
            </div>
            <div className="ml-auto flex items-center pr-[14px] text-[#9a9a9a]">
                <FaCog size={20} />
            </div>
        </div>
    );
}

export default function App() {
    return (
        <div className="relative flex h-[1018px] w-[1499px] flex-col overflow-hidden bg-white font-['Liberation_Sans',sans-serif]">
            <TitleBar />
            <TabBar />
            <Ribbon />
            <div className="relative flex-1 overflow-hidden">
                <Drawing />
                <Browser />
                <div className="absolute bottom-[7px] left-[6px]">
                    <PanelBar title="COMMENTS" plus />
                </div>
                <NavBar />
                <SketchPalette />
            </div>
            <Timeline />
            <div className="absolute inset-y-0 left-0 w-px bg-[#666666]" />
        </div>
    );
}
